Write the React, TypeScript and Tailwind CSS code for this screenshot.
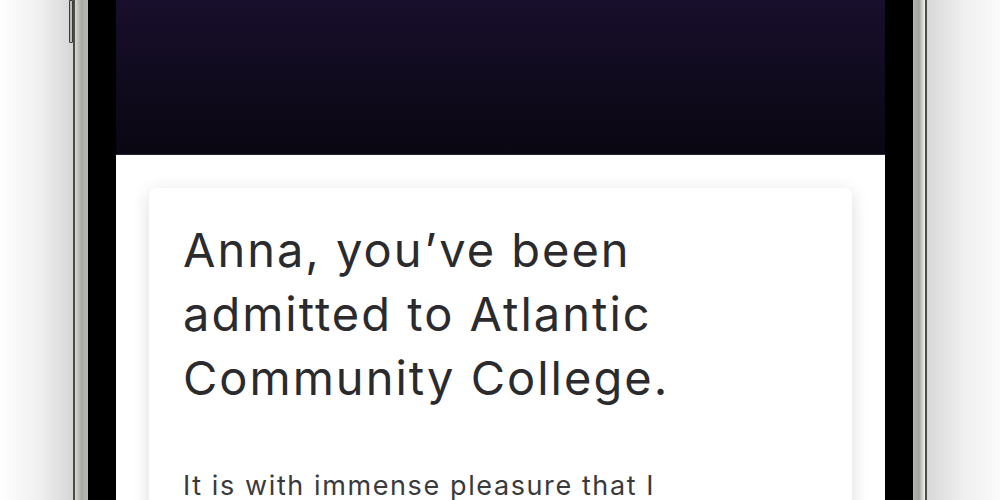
export default function App() {
  return (
    <div className="w-[1000px] h-[500px] flex overflow-hidden bg-white" style={{ fontFamily: 'Inter, "Noto Sans", sans-serif' }}>
      {/* backdrop left */}
      <div className="w-[73px] h-full bg-gradient-to-r from-[#ffffff] via-[#f1f1f1] to-[#d6d6d6] relative">
        {/* side button */}
        <div className="absolute right-[0px] top-0 w-[4px] h-[43px] bg-gradient-to-r from-[#8a8a86] via-[#e6e6e2] to-[#9a9a95] border border-[#3a3a3a] rounded-b-[1px]" />
      </div>

      {/* phone frame */}
      <div className="flex h-full">
        <div className="w-[15px] h-full flex">
          <div className="w-[2px] bg-[#4a4a48]" />
          <div className="flex-1 bg-gradient-to-r from-[#d9d9d5] via-[#a9aaa5] to-[#b8b9b4]" />
        </div>
        <div className="w-[28px] h-full bg-black" />

        {/* screen */}
        <div className="w-[769px] h-full flex flex-col bg-white overflow-hidden">
          <div className="h-[155px] shrink-0 bg-gradient-to-b from-[#180f2c] to-[#0a0712] border-b border-[#2a2438]" />
          <div className="px-[33px] pt-[33px]">
            <div className="bg-white rounded-[8px] shadow-[0_4px_18px_rgba(0,0,0,0.14)] h-[400px] pl-[34px] pr-[30px] pt-[30px]">
              <h1 className="text-[#2b2b2e] text-[47px] leading-[64px] font-normal tracking-[2px]">
                Anna, you’ve been
                <br />
                admitted to Atlantic
                <br />
                Community College.
              </h1>
              <p className="mt-[56px] text-[#3a3a3c] text-[27px] leading-[40px] tracking-[1.6px]">
                It is with immense pleasure that I
              </p>
            </div>
          </div>
        </div>

        <div className="w-[28px] h-full bg-black" />
        <div className="w-[14px] h-full flex">
          <div className="flex-1 bg-gradient-to-r from-[#b5b6b1] via-[#a3a49f] to-[#f4f4f2]" />
          <div className="w-[2px] bg-[#4a4a48]" />
        </div>
      </div>

      {/* backdrop right */}
      <div className="flex-1 h-full bg-gradient-to-r from-[#d8d8d8] via-[#efefef] to-[#fbfbfb]" />
    </div>
  );
}
